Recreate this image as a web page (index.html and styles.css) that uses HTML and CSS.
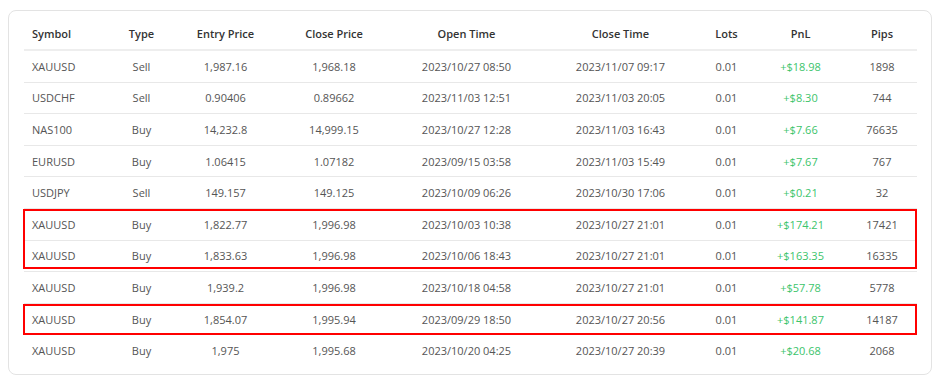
FILE: index.html
```html
<!DOCTYPE html>
<html lang="en">
<head>
<meta charset="utf-8">
<title>Trades</title>
<link rel="stylesheet" href="styles.css">
</head>
<body>
<div class="card">
  <div class="table-wrap">
    <table class="trades">
      <colgroup>
        <col class="c-symbol"><col class="c-type"><col class="c-entry"><col class="c-close"><col class="c-open-time"><col class="c-close-time"><col class="c-lots"><col class="c-pnl"><col class="c-pips">
      </colgroup>
      <thead>
        <tr><th class="left">Symbol</th><th>Type</th><th>Entry Price</th><th>Close Price</th><th>Open Time</th><th>Close Time</th><th>Lots</th><th>PnL</th><th>Pips</th></tr>
      </thead>
      <tbody>
        <tr><td class="left">XAUUSD</td><td>Sell</td><td>1,987.16</td><td>1,968.18</td><td>2023/10/27 08:50</td><td>2023/11/07 09:17</td><td>0.01</td><td class="pos">+$18.98</td><td>1898</td></tr>
        <tr><td class="left">USDCHF</td><td>Sell</td><td>0.90406</td><td>0.89662</td><td>2023/11/03 12:51</td><td>2023/11/03 20:05</td><td>0.01</td><td class="pos">+$8.30</td><td>744</td></tr>
        <tr><td class="left">NAS100</td><td>Buy</td><td>14,232.8</td><td>14,999.15</td><td>2023/10/27 12:28</td><td>2023/11/03 16:43</td><td>0.01</td><td class="pos">+$7.66</td><td>76635</td></tr>
        <tr><td class="left">EURUSD</td><td>Buy</td><td>1.06415</td><td>1.07182</td><td>2023/09/15 03:58</td><td>2023/11/03 15:49</td><td>0.01</td><td class="pos">+$7.67</td><td>767</td></tr>
        <tr><td class="left">USDJPY</td><td>Sell</td><td>149.157</td><td>149.125</td><td>2023/10/09 06:26</td><td>2023/10/30 17:06</td><td>0.01</td><td class="pos">+$0.21</td><td>32</td></tr>
        <tr><td class="left">XAUUSD</td><td>Buy</td><td>1,822.77</td><td>1,996.98</td><td>2023/10/03 10:38</td><td>2023/10/27 21:01</td><td>0.01</td><td class="pos">+$174.21</td><td>17421</td></tr>
        <tr><td class="left">XAUUSD</td><td>Buy</td><td>1,833.63</td><td>1,996.98</td><td>2023/10/06 18:43</td><td>2023/10/27 21:01</td><td>0.01</td><td class="pos">+$163.35</td><td>16335</td></tr>
        <tr><td class="left">XAUUSD</td><td>Buy</td><td>1,939.2</td><td>1,996.98</td><td>2023/10/18 04:58</td><td>2023/10/27 21:01</td><td>0.01</td><td class="pos">+$57.78</td><td>5778</td></tr>
        <tr><td class="left">XAUUSD</td><td>Buy</td><td>1,854.07</td><td>1,995.94</td><td>2023/09/29 18:50</td><td>2023/10/27 20:56</td><td>0.01</td><td class="pos">+$141.87</td><td>14187</td></tr>
        <tr><td class="left">XAUUSD</td><td>Buy</td><td>1,975</td><td>1,995.68</td><td>2023/10/20 04:25</td><td>2023/10/27 20:39</td><td>0.01</td><td class="pos">+$20.68</td><td>2068</td></tr>
      </tbody>
    </table>
    <div class="mark mark-a"></div>
    <div class="mark mark-b"></div>
  </div>
</div>
</body>
</html>
```

FILE: styles.css
```css
html, body {
  margin: 0;
  padding: 0;
  background: #ffffff;
}

body {
  font-family: "Open Sans", "Liberation Sans", sans-serif;
  font-size: 11px;
  color: #555555;
}

.card {
  margin: 10px 0 0 8px;
  width: 924px;
  box-sizing: border-box;
  border: 1px solid #e3e3e3;
  border-radius: 8px;
  padding: 7px 15px 8px 15px;
  background: #ffffff;
}

.table-wrap {
  position: relative;
}

.trades {
  width: 893px;
  border-collapse: collapse;
  table-layout: fixed;
}

.c-symbol { width: 85px; }
.c-type { width: 65px; }
.c-entry { width: 103px; }
.c-close { width: 114px; }
.c-open-time { width: 151px; }
.c-close-time { width: 157px; }
.c-lots { width: 55px; }
.c-pnl { width: 93px; }
.c-pips { width: 70px; }

.trades th,
.trades td {
  padding: 0 8px;
  text-align: center;
  white-space: nowrap;
}

.trades th {
  height: 31px;
  font-weight: 600;
  color: #333333;
  border-bottom: 2px solid #eeeeee;
}

.trades td {
  height: 30.6px;
  border-bottom: 1px solid #e8e8e8;
}

.trades tbody tr:last-child td {
  border-bottom: none;
}

.trades .left {
  text-align: left;
}

.trades .pos {
  color: #3cc46b;
}

.mark {
  position: absolute;
  left: -1px;
  width: 894px;
  box-sizing: border-box;
  border: 2px solid #ff0000;
  pointer-events: none;
}

.mark-a {
  top: 191px;
  height: 60px;
}

.mark-b {
  top: 286px;
  height: 31px;
}
```
